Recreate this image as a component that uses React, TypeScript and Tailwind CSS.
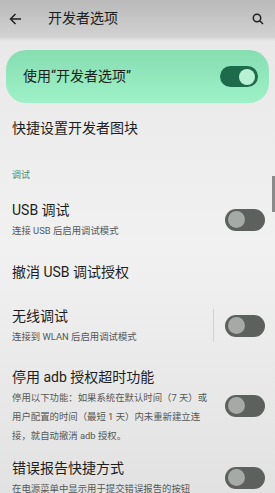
import React from "react";

const font = { fontFamily: 'Roboto, "Noto Sans CJK SC", sans-serif' };

function Toggle({ on = false }: { on?: boolean }) {
  if (on) {
    return (
      <div className="flex h-[21px] w-[38px] items-center justify-end rounded-full bg-[#1d6b4a] pr-[3px]">
        <div className="h-[16px] w-[16px] rounded-full bg-[#b9f2d3]" />
      </div>
    );
  }
  return (
    <div className="flex h-[22px] w-[40px] items-center rounded-full bg-[#5d615e] pl-[3px]">
      <div className="h-[17px] w-[17px] rounded-full bg-[#a6aaa7]" />
    </div>
  );
}

function Row({
  title,
  lines = [],
  toggle = false,
  divider = false,
  className = "",
}: {
  title: string;
  lines?: string[];
  toggle?: boolean;
  divider?: boolean;
  className?: string;
}) {
  return (
    <div className={`flex items-center pl-[12px] pr-[10px] ${className}`}>
      <div className="flex-1">
        <div className="text-[14px] leading-[22px] text-[#1d1d1d]">{title}</div>
        {lines.map((l, i) => (
          <div key={i} className="whitespace-nowrap text-[9.4px] leading-[19px] text-[#555755]">
            {l}
          </div>
        ))}
      </div>
      {divider && <div className="mr-[11px] h-[33px] w-px bg-[#d2d2d2]" />}
      {toggle && <Toggle />}
    </div>
  );
}

export default function App() {
  return (
    <div
      className="relative h-[493px] w-[275px] overflow-hidden bg-gradient-to-b from-[#e7e7e7] via-[#f1f1f1] to-[#e2e2e2]"
      style={font}
    >
      {/* header */}
      <div className="flex h-[37px] items-center bg-gradient-to-b from-[#b9b9b9] to-[#d2d2d2] pl-[9px] pr-[11px]">
        <svg width="13" height="12" viewBox="0 0 13 12" fill="none" stroke="#222" strokeWidth="1.5">
          <path d="M12 6H1.5M6.5 1L1.5 6l5 5" />
        </svg>
        <div className="ml-[26px] flex-1 text-[14px] text-[#1d1d1d]">开发者选项</div>
        <svg width="12" height="12" viewBox="0 0 12 12" fill="none" stroke="#222" strokeWidth="1.5">
          <circle cx="5" cy="5" r="3.7" />
          <path d="M7.7 7.7L11 11" />
        </svg>
      </div>
      <div className="h-[4px] bg-gradient-to-b from-[#d2d2d2] to-[#e7e7e7]" />

      {/* main switch card */}
      <div className="mx-[6px] mt-[9px] flex h-[53px] items-center rounded-[20px] bg-gradient-to-b from-[#86deb1] to-[#9ef1c7] pl-[17px] pr-[11px]">
        <div className="flex-1 text-[14px] text-[#1d1d1d]">使用“开发者选项”</div>
        <Toggle on />
      </div>

      <Row title="快捷设置开发者图块" className="h-[50px]" />

      <div className="flex h-[46px] items-center pl-[12px] text-[9px] text-[#3f8f6d]">调试</div>

      <Row title="USB 调试" lines={["连接 USB 后启用调试模式"]} toggle />

      <Row title="撤消 USB 调试授权" className="h-[64px]" />

      <Row title="无线调试" lines={["连接到 WLAN 后启用调试模式"]} toggle divider className="pt-[1px]" />

      <Row
        title="停用 adb 授权超时功能"
        lines={["停用以下功能：如果系统在默认时间（7 天）或", "用户配置的时间（最短 1 天）内未重新建立连", "接，就自动撤消 adb 授权。"]}
        toggle
        className="mt-[20px]"
      />

      <Row title="错误报告快捷方式" lines={["在电源菜单中显示用于提交错误报告的按钮"]} toggle className="mt-[12px]" />

      {/* scrollbar */}
      <div className="absolute right-0 top-[176px] h-[36px] w-[3px] bg-[#8a8a8a]" />
    </div>
  );
}
